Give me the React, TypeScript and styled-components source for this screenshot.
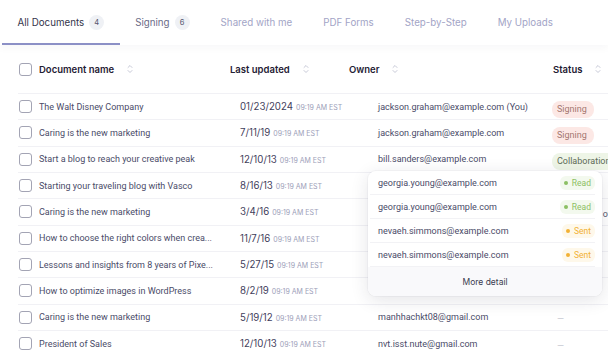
import styled, { createGlobalStyle } from "styled-components";

const GlobalStyle = createGlobalStyle`
    html, body {
        margin: 0;
        padding: 0;
        background: #ffffff;
    }
    body {
        font-family: Inter, "Noto Sans", sans-serif;
        -webkit-font-smoothing: antialiased;
    }
`;

type Tone = "signing" | "collab" | "neutral" | "none";

type Doc = {
    name: string;
    date: string;
    owner: string;
    status: string;
    tone: Tone;
};

const docs: Doc[] = [
    { name: "The Walt Disney Company", date: "01/23/2024", owner: "jackson.graham@example.com (You)", status: "Signing", tone: "signing" },
    { name: "Caring is the new marketing", date: "7/11/19", owner: "jackson.graham@example.com", status: "Signing", tone: "signing" },
    { name: "Start a blog to reach your creative peak", date: "12/10/13", owner: "bill.sanders@example.com", status: "Collaboration", tone: "collab" },
    { name: "Starting your traveling blog with Vasco", date: "8/16/13", owner: "georgia.young@example.com", status: "—", tone: "none" },
    { name: "Caring is the new marketing", date: "3/4/16", owner: "georgia.young@example.com", status: "Waiting for others", tone: "neutral" },
    { name: "How to choose the right colors when crea...", date: "11/7/16", owner: "nevaeh.simmons@example.com", status: "—", tone: "none" },
    { name: "Lessons and insights from 8 years of Pixe...", date: "5/27/15", owner: "nevaeh.simmons@example.com", status: "—", tone: "none" },
    { name: "How to optimize images in WordPress", date: "8/2/19", owner: "nevaeh.simmons@example.com", status: "—", tone: "none" },
    { name: "Caring is the new marketing", date: "5/19/12", owner: "manhhachkt08@gmail.com", status: "—", tone: "none" },
    { name: "President of Sales", date: "12/10/13", owner: "nvt.isst.nute@gmail.com", status: "—", tone: "none" },
];

const tabs = [
    { label: "All Documents", count: 4, color: "#33344a", active: true },
    { label: "Signing", count: 6, color: "#6a6b86", active: false },
    { label: "Shared with me", color: "#a2a4c6", active: false },
    { label: "PDF Forms", color: "#a2a4c6", active: false },
    { label: "Step-by-Step", color: "#a2a4c6", active: false },
    { label: "My Uploads", color: "#a2a4c6", active: false },
];

const recipients = [
    { email: "georgia.young@example.com", state: "Read" },
    { email: "georgia.young@example.com", state: "Read" },
    { email: "nevaeh.simmons@example.com", state: "Sent" },
    { email: "nevaeh.simmons@example.com", state: "Sent" },
];

const Page = styled.div`
    position: relative;
    width: 608px;
    height: 361px;
    overflow: hidden;
    background: #ffffff;
`;

const TabBar = styled.div`
    display: flex;
    height: 45px;
    padding-left: 2px;
    background: #ffffff;
    box-shadow: 0 3px 8px rgba(30, 30, 60, 0.035);
    position: relative;
    z-index: 1;
`;

const Tab = styled.div<{ $active: boolean; $color: string }>`
    display: flex;
    align-items: center;
    padding: 0 15.5px;
    margin-top: 2px;
    font-size: 9.75px;
    color: ${(p) => p.$color};
    border-bottom: 2px solid ${(p) => (p.$active ? "#8c90c6" : "transparent")};
    white-space: nowrap;
`;

const Count = styled.span`
    display: inline-flex;
    align-items: center;
    justify-content: center;
    width: 15px;
    height: 15px;
    margin-left: 5px;
    border-radius: 50%;
    background: #eff1f5;
    font-size: 7.5px;
    color: #55566e;
`;

const HeaderRow = styled.div`
    display: grid;
    grid-template-columns: 20px 191px 119px 204px 1fr;
    align-items: center;
    height: 48px;
    margin-left: 18px;
    padding-left: 1px;
    width: 700px;
`;

const HeadCell = styled.div`
    display: flex;
    align-items: center;
    font-size: 9.5px;
    font-weight: 600;
    color: #1f2034;
    white-space: nowrap;
`;

const SortIcon = styled.svg`
    margin-left: 13px;
    flex: none;
`;

const Row = styled.div`
    display: grid;
    grid-template-columns: 20px 201px 138px 174px 1fr;
    align-items: center;
    height: 26.33px;
    box-sizing: border-box;
    border-top: 1px solid #f1f1f5;
    margin-left: 18px;
    padding-left: 1px;
    width: 700px;
`;

const Box = styled.span`
    display: block;
    width: 13px;
    height: 13px;
    box-sizing: border-box;
    border: 1.2px solid #a3a4b4;
    border-radius: 3px;
    background: #ffffff;
`;

const NameCell = styled.div`
    font-family: Roboto, "Liberation Sans", sans-serif;
    font-size: 9px;
    color: #4a4b68;
    white-space: nowrap;
`;

const DateCell = styled.div`
    font-size: 9.7px;
    color: #3f405c;
    white-space: nowrap;
`;

const Time = styled.span`
    margin-left: 3px;
    font-size: 7px;
    color: #9c9eb8;
`;

const OwnerCell = styled(NameCell)``;

const toneStyles: Record<Tone, { bg: string; fg: string }> = {
    signing: { bg: "#fce8e5", fg: "#a4766f" },
    collab: { bg: "#eef5e7", fg: "#5d6b57" },
    neutral: { bg: "transparent", fg: "#55566e" },
    none: { bg: "transparent", fg: "#c5c6d0" },
};

const Chip = styled.span<{ $tone: Tone }>`
    display: inline-block;
    padding: 3px 7px 3px 5px;
    border-radius: 8px;
    font-family: Roboto, "Liberation Sans", sans-serif;
    font-size: 9px;
    line-height: 11px;
    white-space: nowrap;
    background: ${(p) => toneStyles[p.$tone].bg};
    color: ${(p) => toneStyles[p.$tone].fg};
`;

const Popup = styled.div`
    position: absolute;
    left: 368px;
    top: 171px;
    width: 234px;
    background: #ffffff;
    border-radius: 8px;
    box-shadow: 0 4px 18px rgba(30, 30, 60, 0.12), 0 0 0 1px rgba(30, 30, 60, 0.03);
    overflow: hidden;
    z-index: 2;
`;

const PopItem = styled.div`
    display: flex;
    align-items: center;
    justify-content: space-between;
    height: 24px;
    margin: 0 7px 0 2px;
    padding-left: 8px;
    border-bottom: 1px solid #f2f2f5;
    box-sizing: border-box;
    font-family: Roboto, "Liberation Sans", sans-serif;
    font-size: 9px;
    color: #4a4b68;

    &:last-of-type {
        border-bottom: none;
    }
`;

const StateTag = styled.span<{ $read: boolean }>`
    display: inline-flex;
    align-items: center;
    gap: 4px;
    padding: 2px 4px;
    border-radius: 6px;
    font-family: Roboto, "Liberation Sans", sans-serif;
    font-size: 8.5px;
    color: ${(p) => (p.$read ? "#8cc063" : "#f2b134")};
    background: ${(p) => (p.$read ? "#f3f9ee" : "#fef8ea")};

    &::before {
        content: "";
        width: 4px;
        height: 4px;
        border-radius: 50%;
        background: currentColor;
    }
`;

const MoreDetail = styled.div`
    display: flex;
    align-items: center;
    justify-content: center;
    height: 29px;
    background: #f9f9fb;
    font-size: 8.5px;
    color: #3a3b50;
`;

const Sort = () => (
    <SortIcon width="6" height="10" viewBox="0 0 6 10" fill="none">
        <path d="M1 3.5 L3 1.5 L5 3.5 M1 6.5 L3 8.5 L5 6.5" stroke="#c6c8d6" strokeWidth="1" strokeLinecap="round" strokeLinejoin="round" />
    </SortIcon>
);

const App = () => {
    return (
        <Page>
            <GlobalStyle />
            <TabBar>
                {tabs.map((t) => (
                    <Tab key={t.label} $active={t.active} $color={t.color}>
                        {t.label}
                        {t.count !== undefined && <Count>{t.count}</Count>}
                    </Tab>
                ))}
            </TabBar>

            <HeaderRow>
                <Box />
                <HeadCell>
                    Document name
                    <Sort />
                </HeadCell>
                <HeadCell>
                    Last updated
                    <Sort />
                </HeadCell>
                <HeadCell>
                    Owner
                    <Sort />
                </HeadCell>
                <HeadCell>
                    Status
                    <Sort />
                </HeadCell>
            </HeaderRow>

            {docs.map((d, i) => (
                <Row key={i}>
                    <Box />
                    <NameCell>{d.name}</NameCell>
                    <DateCell>
                        {d.date}
                        <Time>09:19 AM EST</Time>
                    </DateCell>
                    <OwnerCell>{d.owner}</OwnerCell>
                    <div>
                        <Chip $tone={d.tone}>{d.status}</Chip>
                    </div>
                </Row>
            ))}

            <Popup>
                {recipients.map((r, i) => (
                    <PopItem key={i}>
                        {r.email}
                        <StateTag $read={r.state === "Read"}>{r.state}</StateTag>
                    </PopItem>
                ))}
                <MoreDetail>More detail</MoreDetail>
            </Popup>
        </Page>
    );
};

export default App;
